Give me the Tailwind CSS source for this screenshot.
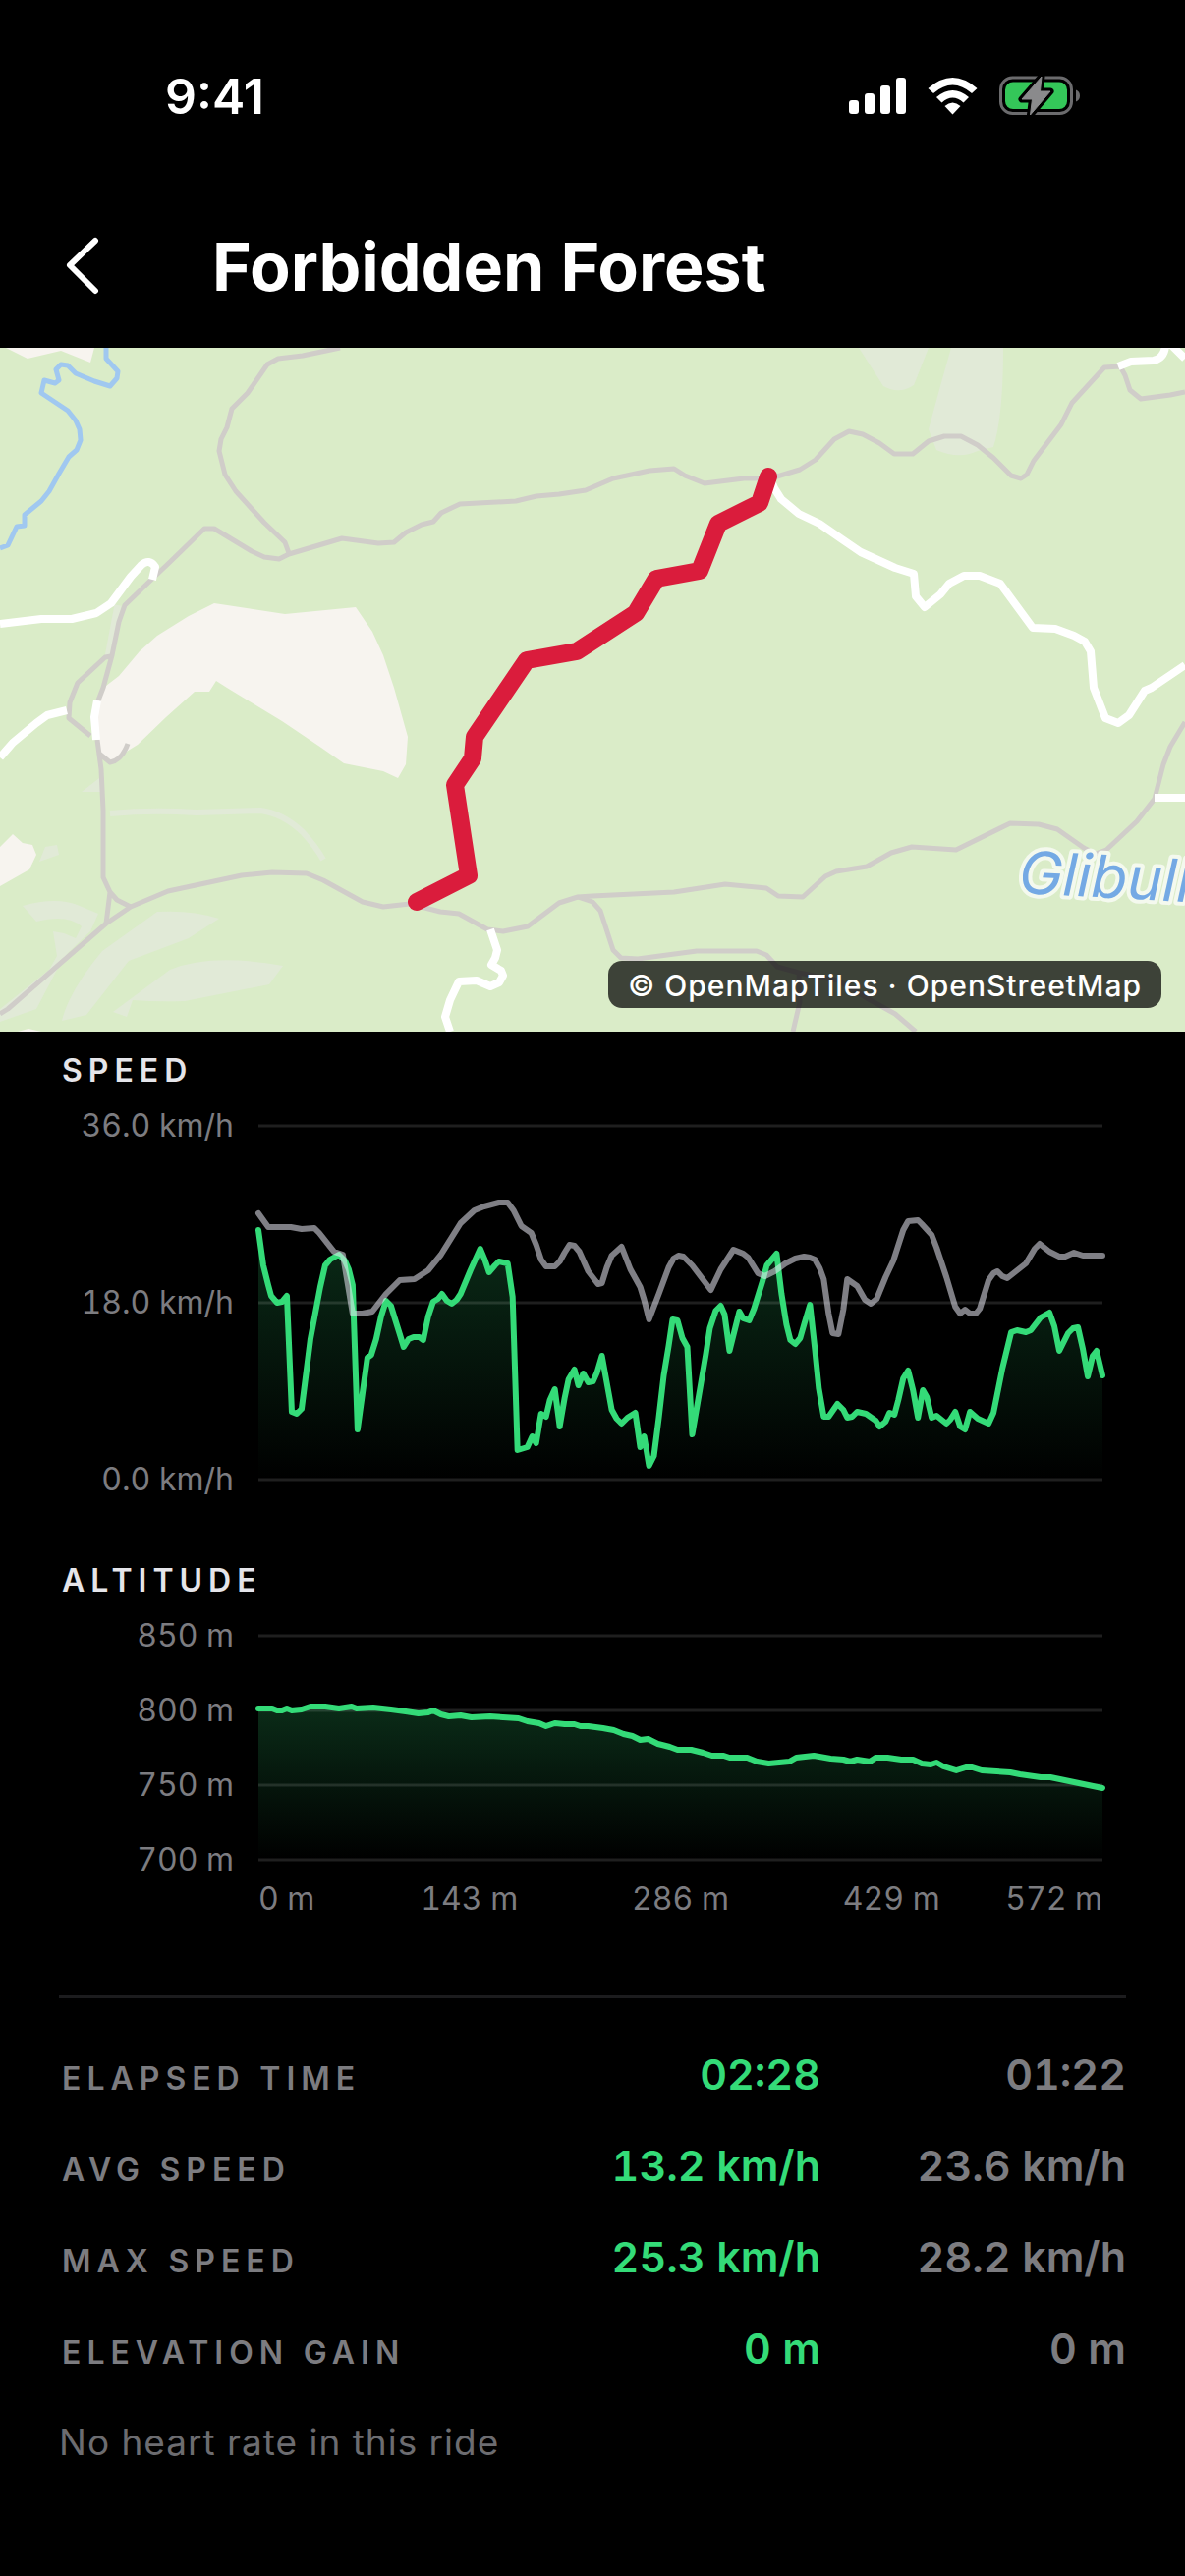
<!DOCTYPE html>
<html lang="en">
<head>
    <meta charset="UTF-8">
    <meta name="viewport" content="width=device-width, initial-scale=1.0">
    <title>Forbidden Forest</title>
    <script src="https://cdn.jsdelivr.net/npm/@tailwindcss/browser@4"></script>
</head>
<body class="bg-black text-white font-['Inter','Liberation_Sans',sans-serif] min-h-screen overflow-x-hidden">

<!-- Status bar -->
<div class="h-[196px] pl-[168px] pr-[106px] flex items-center justify-between">
    <span class="text-[50px] leading-[60px] font-semibold">9:41</span>
    <div class="flex items-center gap-[22px]">
        <svg class="w-[58px] h-[38px]" viewBox="0 0 58 38" fill="#fff">
            <rect x="0" y="23" width="10" height="14" rx="3"/>
            <rect x="16" y="16" width="10" height="21" rx="3"/>
            <rect x="32" y="8" width="10" height="29" rx="3"/>
            <rect x="48" y="0" width="10" height="37" rx="3"/>
        </svg>
        <svg class="w-[51px] h-[38px]" viewBox="0 0 51 38" fill="#fff">
            <path d="M0.5 11 Q25.5 -11 50.5 11 L45 16 Q25.5 -1 6 16 Z"/>
            <path d="M9 20 Q25.5 6 42 20 L36.500 25.500 Q25.500 15.500 14.500 25.500 Z"/>
            <path d="M17.500 29 Q25.500 22 33.500 29 L25.500 37.500 Z"/>
        </svg>
        <svg class="w-[83px] h-[42px]" viewBox="0 0 83 42">
            <rect x="1.500" y="2" width="72" height="36.500" rx="12" fill="none" stroke="#6b6b6d" stroke-width="3"/>
            <path d="M78 14.500 a6.500 6.500 0 0 1 0 12 z" fill="#6b6b6d"/>
            <rect x="6" y="6.500" width="63" height="27.500" rx="8" fill="#34c759"/>
            <path d="M43 1 L23 24 H33.500 L31.500 40 L52 16 H41.500 Z" fill="#8a8a8c" stroke="#000" stroke-width="7" stroke-linejoin="round"/>
            <path d="M43 1 L23 24 H33.500 L31.500 40 L52 16 H41.500 Z" fill="#8a8a8c" stroke="#8a8a8c" stroke-width="1" stroke-linejoin="round"/>
        </svg>
    </div>
</div>

<!-- Header -->
<header class="h-[150px] mb-2 pl-[60px] flex items-center">
    <button type="button" aria-label="Back" class="w-[156px] h-20 flex items-center">
        <svg class="w-12 h-[60px]" viewBox="0 0 48 60" fill="none" stroke="#fff" stroke-width="6" stroke-linecap="round" stroke-linejoin="round">
            <path d="M37 4 L11 29 L37 55"/>
        </svg>
    </button>
    <h1 class="text-[68px] leading-[76px] font-bold">Forbidden Forest</h1>
</header>

<!-- Map -->
<section class="relative">
    <svg class="block w-full h-[696px]" viewBox="0 0 1206 696" preserveAspectRatio="xMidYMid slice" fill="none" stroke-linejoin="round">
        <rect width="1206" height="696" fill="#daecc8"/>
        <g fill="#e1ead7">
            <path d="M874 0 L899 39 Q915 48 930 38 L945 0 Z"/>
            <path d="M968 0 L957 39 L945 83 L953 104 Q976 114 995 105 L1011 101 Q1021 70 1021 0 Z"/>
            <path d="M101 438 L83 452 H103 Z M46 508 L58 506 L60 516 L40 523 Z"/>
            <path d="M23 568 Q58 558 81 568 L100 576 L92 594 L69 616 L58 633 L37 673 L0 686 V673 L50 633 L58 619 L54 594 L65 596 L77 601 L83 589 Q69 576 37 584 Z"/>
            <path d="M160 574 Q195 572 223 581 L192 601 L131 624 L88 679 L63 685 Q70 655 104 614 Z"/>
            <path d="M288 629 L274 648 L188 665 Q160 666 135 664 L129 681 L115 676 L173 633 Q215 616 288 629 Z"/>
        </g>
        <path d="M112 474 Q154 470 200 473 L265 471 Q288 474 308 493 Q321 507 329 521" stroke="#e1ead7" stroke-width="6"/>
        <path d="M120 262 L110 315" stroke="#e1ead7" stroke-width="7"/>
        <g fill="#f7f4ef">
            <path d="M6 0 L28 11 L62 3 L92 15 L96 0 Z"/>
            <path d="M218 260 L290 271 L362 264 L379 289 L390 313 L401 346 L415 396 L413 424 L405 438 L390 431 L350 423 L327 407 L287 380 L231 346 L220 339 L213 350 L198 350 L169 376 L140 404 L127 412 L112 423 L101 413 L98 395 L100 359 L108 344 L121 334 L142 309 L160 293 L192 273 Z"/>
            <path d="M0 508 L13 495 L23 504 L33 506 L37 516 L30 531 L0 548 Z"/>
            <path d="M18 696 L29 693 L42 696 Z"/>
        </g>
        <!-- paths -->
        <g stroke="#d0cdc9" stroke-width="5">
            <path d="M346 0 L308 8 L283 11 L272 17 L252 46 L236 62 L231 81 L225 93 L223 105 L229 129 L240 146 L269 178 L290 198 L294 209"/>
            <path d="M100 359 L105 346 L114 313 L121 279 L127 262 L154 236 L173 218 L208 184 L218 184 L256 207 L269 213 L284 215 L294 210 L348 194 L385 199 L401 198 L413 188 L429 180 L441 177 L449 168 L468 159 L525 156 L546 151 L569 149 L596 145 L624 133 L661 125 L686 123 L697 130 L717 138 L757 133 L784 133 L814 124 L830 114 L849 93 L864 85 L878 88 L895 97 L910 108 L929 108 L945 95 L961 90 L978 90 L995 99 L1011 112 L1029 130 L1039 133 L1045 129 L1052 115 L1080 78 L1091 56 L1124 20 L1140 19 L1145 28 L1150 43 L1161 52 L1191 48 L1206 45"/>
            <path d="M113 314 L107 315 L79 341 L71 361 L70 377 L92 395"/>
            <path d="M99 399 L103 429 L105 471 L105 539 L112 554 L108 586 M112 554 L119 562 L133 569 M101 413 L112 422 Q124 420 130 403"/>
            <path d="M0 678 L8 673 L108 586 L133 569 L171 553 L246 537 L277 534 L312 535 L329 542 L369 564 L390 569 L417 566 L448 574 L467 576 L496 592 L512 594 L537 589 L569 565 L588 559 L603 558 L686 554 L738 546 L780 550 L792 558 L817 559 L840 538 L851 533 L882 528 L907 514 L928 508 L973 511 L1028 484 L1057 485 L1076 490 L1103 509 L1115 515 L1126 511 L1157 482 L1175 459 L1184 424 L1191 406 L1206 381"/>
            <path d="M588 559 L603 564 L611 573 L624 613 L632 621 L649 622 L709 614 L770 614 L780 618 L791 630 L813 636 L853 644 L884 663 L911 678 L932 696 M813 636 L814 666 L807 696"/>
        </g>
        <!-- roads -->
        <g stroke="#fff" stroke-width="8">
            <path d="M0 281 L42 276 L73 276 L98 270 L113 260 L133 233 L144 221 Q152 214 158 223 L155 236"/>
            <path d="M99 359 L96 376 L98 399"/>
            <path d="M68 369 L48 374 L37 382 L13 402 L0 417"/>
            <path d="M1138 19 L1151 14 L1174 13 Q1186 10 1186 -4 M1191 -4 L1206 11"/>
            <path d="M784 133 L788 143 L795 154 L813 169 L834 179 L857 195 L876 208 L911 224 L930 230 L932 253 L941 264 L957 251 L966 240 L981 232 L997 232 L1018 240 L1051 285 L1074 286 L1093 293 L1104 299 L1110 309 L1113 346 L1125 377 L1138 382 L1149 374 L1165 349 L1172 346 L1206 323"/>
            <path d="M1175 458 H1206"/>
            <path d="M499 592 L506 613 L504 621 L500 628 L510 634 L512 639 L508 646 L499 650 L485 644 L467 645 L458 664 L453 681 L458 696"/>
        </g>
        <!-- river -->
        <path d="M108 -4 L108 11 L120 24 L119 31 L112 39 L96 34 L77 26 L69 18 L62 17 L57 22 L60 33 L56 36 L45 33 L42 46 L69 64 L77 74 L81 83 L82 94 L78 104 L70 111 L60 128 L50 146 L42 156 L25 170 L25 181 L17 182 L8 201 L0 204" stroke="#a0c8f0" stroke-width="5"/>
        <text x="1036" y="555" transform="rotate(3 1036 555)" class="text-[60px] italic" fill="#74a9e4" stroke="#f4f9ee" stroke-width="8" paint-order="stroke">Glibull</text>
        <!-- ride -->
        <path d="M424 564 L477 537 L463 445 L481 418 L483 396 L536 318 L587 309 L647 270 L668 235 L712 227 L731 179 L773 158 L782 131" stroke="#da1c3c" stroke-width="18" stroke-linecap="round"/>
    </svg>
    <p class="absolute right-6 bottom-6 h-12 px-5 rounded-[14px] bg-black/72 text-[30px] leading-[50px] font-medium tracking-[1px]">© <a href="#">OpenMapTiles</a> · <a href="#">OpenStreetMap</a></p>
</section>

<main class="px-[60px] pt-5">
    <!-- Speed -->
    <h2 class="pl-[3px] text-[32px] leading-10 font-semibold tracking-[6px] text-[#e5e5ea]">SPEED</h2>
    <div class="mt-4 pr-6 flex gap-[25px] h-[400px]">
        <div class="w-[178px] flex flex-col justify-between text-right text-[32px] leading-10 tabular-nums whitespace-nowrap text-[#7c7c80]">
            <span>36.0 km/h</span>
            <span>18.0 km/h</span>
            <span>0.0 km/h</span>
        </div>
        <div class="flex-1 min-w-0 py-5">
            <svg class="block w-full h-full overflow-visible" viewBox="0 0 860 360" preserveAspectRatio="none" fill="none" stroke-linejoin="round" stroke-linecap="round">
                <defs>
                    <linearGradient id="fade" x1="0" y1="0" x2="0" y2="1">
                        <stop offset="0" stop-color="#34db78" stop-opacity="0.2"/>
                        <stop offset="1" stop-color="#34db78" stop-opacity="0"/>
                    </linearGradient>
                </defs>
                <path fill="url(#fade)" d="M0 106 L5 142 L10 162 L13 173 L19 180 L24 179 L29 173 L34 291 L39 293 L44 288 L53 217 L63 164 L68 142 L73 136 L82 131 L88 137 L92 146 L96 162 L101 309 L111 236 L115 233 L120 217 L125 194 L130 178 L135 183 L139 196 L144 212 L148 225 L153 217 L158 215 L164 215 L168 218 L173 194 L178 179 L183 176 L187 171 L192 178 L197 181 L202 177 L206 171 L216 147 L226 125 L231 137 L235 149 L241 142 L245 138 L254 140 L259 174 L264 330 L274 327 L279 316 L283 323 L288 293 L293 296 L297 279 L302 268 L307 306 L312 277 L316 258 L322 248 L326 264 L331 252 L336 261 L341 260 L345 251 L350 234 L360 289 L365 298 L370 303 L376 297 L384 292 L389 327 L393 316 L398 346 L403 336 L408 297 L413 254 L418 224 L422 197 L427 198 L432 216 L437 225 L442 314 L456 232 L460 206 L466 188 L471 183 L475 192 L480 229 L490 189 L494 196 L500 198 L505 186 L514 157 L518 142 L528 130 L533 171 L538 202 L542 218 L547 222 L552 216 L556 202 L562 182 L567 227 L571 267 L576 296 L581 296 L590 283 L596 289 L600 297 L605 296 L610 291 L619 293 L629 300 L633 306 L639 301 L643 292 L648 294 L652 279 L657 257 L662 249 L667 269 L672 297 L677 269 L681 276 L686 297 L691 295 L701 303 L705 299 L710 291 L715 306 L720 309 L725 291 L733 298 L744 303 L749 292 L758 247 L767 210 L773 208 L782 210 L787 208 L797 195 L806 190 L811 204 L816 229 L825 211 L830 206 L835 205 L840 227 L845 255 L850 234 L854 229 L860 254 V360 H0 Z"/>
                <path d="M0 0 H860 M0 180 H860 M0 360 H860" stroke="#fff" stroke-opacity="0.12" stroke-width="3" stroke-linecap="butt"/>
                <path vector-effect="non-scaling-stroke" stroke="#34db78" stroke-width="6" d="M0 106 L5 142 L10 162 L13 173 L19 180 L24 179 L29 173 L34 291 L39 293 L44 288 L53 217 L63 164 L68 142 L73 136 L82 131 L88 137 L92 146 L96 162 L101 309 L111 236 L115 233 L120 217 L125 194 L130 178 L135 183 L139 196 L144 212 L148 225 L153 217 L158 215 L164 215 L168 218 L173 194 L178 179 L183 176 L187 171 L192 178 L197 181 L202 177 L206 171 L216 147 L226 125 L231 137 L235 149 L241 142 L245 138 L254 140 L259 174 L264 330 L274 327 L279 316 L283 323 L288 293 L293 296 L297 279 L302 268 L307 306 L312 277 L316 258 L322 248 L326 264 L331 252 L336 261 L341 260 L345 251 L350 234 L360 289 L365 298 L370 303 L376 297 L384 292 L389 327 L393 316 L398 346 L403 336 L408 297 L413 254 L418 224 L422 197 L427 198 L432 216 L437 225 L442 314 L456 232 L460 206 L466 188 L471 183 L475 192 L480 229 L490 189 L494 196 L500 198 L505 186 L514 157 L518 142 L528 130 L533 171 L538 202 L542 218 L547 222 L552 216 L556 202 L562 182 L567 227 L571 267 L576 296 L581 296 L590 283 L596 289 L600 297 L605 296 L610 291 L619 293 L629 300 L633 306 L639 301 L643 292 L648 294 L652 279 L657 257 L662 249 L667 269 L672 297 L677 269 L681 276 L686 297 L691 295 L701 303 L705 299 L710 291 L715 306 L720 309 L725 291 L733 298 L744 303 L749 292 L758 247 L767 210 L773 208 L782 210 L787 208 L797 195 L806 190 L811 204 L816 229 L825 211 L830 206 L835 205 L840 227 L845 255 L850 234 L854 229 L860 254"/>
                <path vector-effect="non-scaling-stroke" stroke="#ebebf5" stroke-opacity="0.54" stroke-width="6" d="M0 89 L10 103 L20 103 L33 103 L44 105 L57 104 L62 109 L77 128 L86 131 L91 161 L96 191 L106 191 L116 189 L130 171 L144 157 L159 156 L173 147 L186 131 L206 99 L220 86 L230 82 L245 78 L254 78 L260 86 L268 102 L278 109 L283 121 L288 136 L293 143 L302 143 L307 138 L312 129 L317 121 L322 122 L327 128 L336 148 L346 161 L350 160 L355 144 L360 132 L370 123 L379 146 L389 164 L393 177 L398 197 L408 171 L418 144 L423 135 L428 132 L433 133 L442 142 L461 167 L471 146 L484 126 L494 130 L499 134 L509 150 L516 153 L526 148 L537 140 L547 135 L556 133 L562 134 L567 136 L572 145 L576 156 L581 191 L585 211 L591 212 L596 187 L600 156 L610 163 L618 177 L624 181 L630 176 L639 154 L647 137 L657 106 L662 97 L672 96 L676 100 L686 111 L691 124 L701 154 L710 184 L715 191 L720 187 L725 191 L731 191 L735 186 L744 157 L749 150 L753 148 L758 153 L763 155 L782 140 L791 125 L796 120 L806 128 L816 133 L822 133 L831 129 L840 132 L860 132"/>
            </svg>
        </div>
    </div>

    <!-- Altitude -->
    <h2 class="mt-[63px] pl-[3px] text-[32px] leading-10 font-semibold tracking-[6px] text-[#e5e5ea]">ALTITUDE</h2>
    <div class="mt-4 pr-6 flex gap-[25px] h-[268px]">
        <div class="w-[178px] flex flex-col justify-between text-right text-[32px] leading-10 tabular-nums whitespace-nowrap text-[#7c7c80]">
            <span>850 m</span>
            <span>800 m</span>
            <span>750 m</span>
            <span>700 m</span>
        </div>
        <div class="flex-1 min-w-0 py-5">
            <svg class="block w-full h-full overflow-visible" viewBox="0 0 860 228" preserveAspectRatio="none" fill="none" stroke-linejoin="round" stroke-linecap="round">
                <path fill="url(#fade)" d="M0 74 L53 72 L117 73 L163 79 L206 81 L265 84 L293 92 L351 94 L389 106 L427 116 L480 124 L520 130 L566 122 L623 128 L641 124 L711 137 L766 139 L807 144 L860 155 V228 H0 Z"/>
                <path d="M0 0 H860 M0 76 H860 M0 152 H860 M0 228 H860" stroke="#fff" stroke-opacity="0.12" stroke-width="3" stroke-linecap="butt"/>
                <path vector-effect="non-scaling-stroke" stroke="#34db78" stroke-width="6" d="M0 74 L14 74 L19 76 L24 76 L29 74 L34 76 L44 75 L53 72 L68 72 L82 74 L95 72 L100 74 L117 73 L135 75 L150 77 L163 79 L173 78 L178 76 L186 80 L194 82 L206 81 L217 83 L236 82 L265 84 L274 87 L286 89 L293 92 L302 89 L312 90 L322 90 L328 92 L336 92 L351 94 L362 96 L372 100 L381 102 L389 106 L397 105 L407 110 L419 113 L427 116 L441 116 L453 119 L462 122 L474 122 L480 124 L498 124 L508 128 L520 130 L541 128 L548 124 L566 122 L583 125 L596 126 L603 128 L610 126 L623 128 L629 124 L641 124 L655 126 L667 126 L676 130 L685 131 L691 129 L698 133 L711 137 L724 133 L737 137 L766 139 L776 141 L797 144 L807 144 L860 155"/>
            </svg>
        </div>
    </div>
    <div class="pl-[203px] pr-6 grid grid-cols-8 text-[32px] leading-10 tabular-nums text-[#7c7c80] text-center whitespace-nowrap">
        <span class="text-left">0 m</span>
        <span class="col-span-2">143 m</span>
        <span class="col-span-2">286 m</span>
        <span class="col-span-2">429 m</span>
        <span class="text-right">572 m</span>
    </div>

    <!-- Stats -->
    <div class="mt-[78px] pt-[31px] border-t-3 border-[#1c1c1e]">
        <table class="w-full">
            <tbody class="text-[43px] leading-[53px] font-semibold tabular-nums text-right text-[#7c7c80]">
                <tr class="align-baseline">
                    <th scope="row" class="pl-[3px] text-left text-[32px] font-semibold tracking-[6px]">ELAPSED TIME</th>
                    <td class="py-5 text-[#34db78]">02:28</td>
                    <td class="py-5 w-[311px]">01:22</td>
                </tr>
                <tr class="align-baseline">
                    <th scope="row" class="pl-[3px] text-left text-[32px] font-semibold tracking-[6px]">AVG SPEED</th>
                    <td class="py-5 text-[#34db78]">13.2 km/h</td>
                    <td class="py-5">23.6 km/h</td>
                </tr>
                <tr class="align-baseline">
                    <th scope="row" class="pl-[3px] text-left text-[32px] font-semibold tracking-[6px]">MAX SPEED</th>
                    <td class="py-5 text-[#34db78]">25.3 km/h</td>
                    <td class="py-5">28.2 km/h</td>
                </tr>
                <tr class="align-baseline">
                    <th scope="row" class="pl-[3px] text-left text-[32px] font-semibold tracking-[6px]">ELEVATION GAIN</th>
                    <td class="py-5 text-[#34db78]">0 m</td>
                    <td class="py-5">0 m</td>
                </tr>
            </tbody>
        </table>
    </div>
    <p class="mt-[27px] text-[37px] leading-[44px] tracking-[1px] text-[#6c6c70]">No heart rate in this ride</p>
</main>

</body>
</html>
